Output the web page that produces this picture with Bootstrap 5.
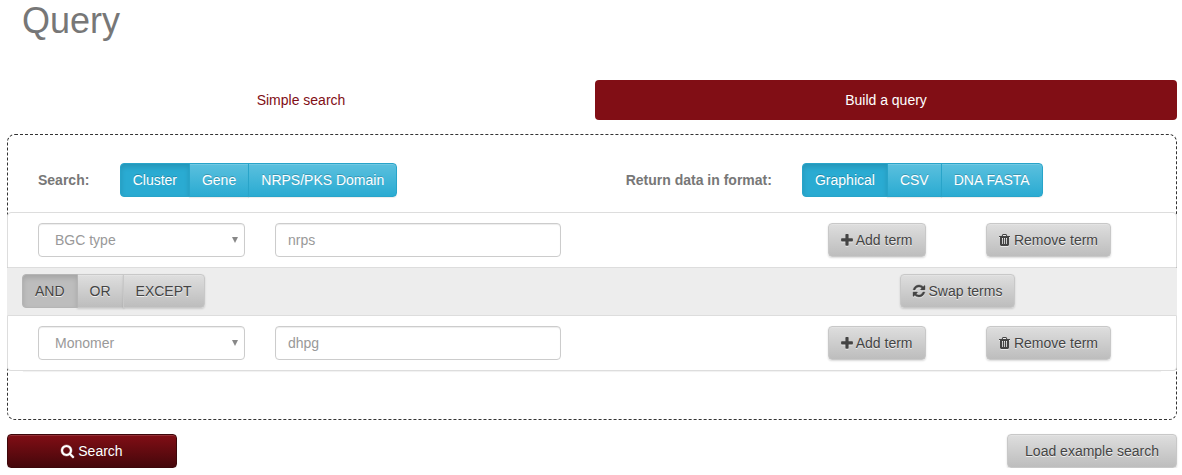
<!DOCTYPE html>
<html lang="en">
<head>
<meta charset="utf-8">
<meta name="viewport" content="width=device-width, initial-scale=1">
<title>Query</title>
<link href="https://cdn.jsdelivr.net/npm/bootstrap@5.3.0/dist/css/bootstrap.min.css" rel="stylesheet">
<style>
  body { font: 14px/20px "Liberation Sans", Arial, sans-serif; color: #777; overflow: hidden; }
  .page { width: 1170px; margin-left: 7px; }
  h1 { font-size: 36px; line-height: 40px; font-weight: 400; padding: 1px 0 0 15px; margin-bottom: 39px; }
  .nav-pills { --bs-nav-pills-border-radius: 4px; --bs-nav-pills-link-active-bg: #810e15; --bs-nav-link-color: #810e15; --bs-nav-link-hover-color: #810e15; }
  .nav-pills .nav-link { padding: 10px 15px; font-size: 14px; }
  .nav-pills .nav-item:first-child { flex: 0 0 588px; }
  .builder { border: 1px dashed #333; border-radius: 8px; margin-top: 14px; height: 286px; padding-top: 28px; }
  .btn { --bs-btn-padding-x: 12px; --bs-btn-padding-y: 6px; --bs-btn-font-size: 14px; --bs-btn-line-height: 20px; --bs-btn-border-radius: 4px; white-space: nowrap; }
  .btn-glossy { color: #444; text-shadow: 0 1px 0 #f0f0f0; background: linear-gradient(#dedede, #bdbdbd); border-color: #c8c8c8; box-shadow: inset 0 1px 0 rgba(255,255,255,.15), 0 1px 2px rgba(0,0,0,.15); }
  .btn-glossy.active { color: #444; background: #bdbdbd; border-color: #b5b5b5; box-shadow: inset 0 3px 5px rgba(0,0,0,.125); }
  .btn-aqua { color: #fff; text-shadow: 0 -1px 0 rgba(0,0,0,.2); background: linear-gradient(#5bc0de, #2aabd2); border-color: #28a4c9; box-shadow: inset 0 1px 0 rgba(255,255,255,.15), 0 1px 1px rgba(0,0,0,.075); }
  .btn-aqua.active { color: #fff; background: #2aabd2; border-color: #28a4c9; box-shadow: inset 0 3px 5px rgba(0,0,0,.125); }
  .btn-wine { color: #fff; text-shadow: 0 -1px 0 rgba(0,0,0,.2); background: linear-gradient(#810e15, #45070b); border-color: #3e070a; box-shadow: inset 0 1px 0 rgba(255,255,255,.15), 0 1px 1px rgba(0,0,0,.075); }
  .wide-btn { width: 170px; }
  .search-side { padding-left: 30px; }
  .search-side .btn { padding-left: 11.7px; padding-right: 11.9px; }
  .search-side .btn:nth-child(2) { padding-left: 12px; }
  .search-side .btn:last-child { padding-left: 12.2px; padding-right: 12.1px; }
  .format-side { padding-left: 33.7px; }
  .search-label { width: 82px; }
  .format-label { width: 176.300px; }
  .term-list { --bs-list-group-border-radius: 4px; --bs-list-group-border-color: #ddd; margin: 15px -1px 0; }
  .term-list .list-group-item { color: #777; }
  .term-row { padding: 10px 65px 10px 30px; }
  .list-group .operator-row { padding: 6px 161px 7px 14px; background: #ededed; border-top: 0; border-left-color: #ededed; border-right-color: #ededed; }
  .field { height: 34px; border: 1px solid #ccc; border-radius: 4px; font-size: 14px; line-height: 20px; color: #999; padding: 6px 12px; box-shadow: inset 0 1px 1px rgba(0,0,0,.075); }
  .type-field { width: 207px; padding: 6px 6px 6px 16px; }
  .value-field { width: 286px; margin-left: 30px; }
  .add-btn { width: 98px; padding-left: 11px; padding-right: 12px; }
  .remove-btn { margin-left: 60px; }
  .swap-btn { width: 115px; padding-left: 11px; padding-right: 11px; }
  .panel-edge { height: 1px; margin: 0 15px; box-shadow: 0 0 1px #eee; background: #f2f2f2; }
  .glyph { height: 14px; fill: currentColor; vertical-align: -2px; filter: drop-shadow(0 1px 0 rgba(255,255,255,.6)); }
  .glyph-plus { height: 15px; vertical-align: -3px; }
  .glyph-bold { stroke: currentColor; stroke-width: 50; overflow: visible; }
  .btn-wine .glyph { filter: none; }
  .actions { margin-top: 14px; }
</style>
</head>
<body>
<svg class="d-none" xmlns="http://www.w3.org/2000/svg">
  <symbol id="plus" viewBox="192 0 1408 1792"><path d="M1600 736v192q0 40-28 68t-68 28h-416v416q0 40-28 68t-68 28h-192q-40 0-68-28t-28-68v-416h-416q-40 0-68-28t-28-68v-192q0-40 28-68t68-28h416v-416q0-40 28-68t68-28h192q40 0 68 28t28 68v416h416q40 0 68 28t28 68z"/></symbol>
  <symbol id="trash" viewBox="192 0 1408 1792"><path d="M704 1376v-704q0-14-9-23t-23-9h-64q-14 0-23 9t-9 23v704q0 14 9 23t23 9h64q14 0 23-9t9-23zm256 0v-704q0-14-9-23t-23-9h-64q-14 0-23 9t-9 23v704q0 14 9 23t23 9h64q14 0 23-9t9-23zm256 0v-704q0-14-9-23t-23-9h-64q-14 0-23 9t-9 23v704q0 14 9 23t23 9h64q14 0 23-9t9-23zm-544-992h448l-48-117q-7-9-17-11h-317q-10 2-17 11zm928 32v64q0 14-9 23t-23 9h-96v948q0 83-47 143.500t-113 60.500h-832q-66 0-113-58.500t-47-141.500v-952h-96q-14 0-23-9t-9-23v-64q0-14 9-23t23-9h309l70-167q15-37 54-63t79-26h320q40 0 79 26t54 63l70 167h309q14 0 23 9t9 23z"/></symbol>
  <symbol id="refresh" viewBox="128 0 1536 1792" overflow="visible"><path d="M1639 1056q0 5-1 7-64 268-268 434.500t-478 166.500q-146 0-282.500-55t-243.500-157l-129 129q-19 19-45 19t-45-19-19-45v-448q0-26 19-45t45-19h448q26 0 45 19t19 45-19 45l-137 137q71 66 161 102t187 36q134 0 250-65t186-179q11-17 53-117 8-23 30-23h192q13 0 22.500 9.500t9.500 22.500zm25-800v448q0 26-19 45t-45 19h-448q-26 0-45-19t-19-45 19-45l138-138q-148-137-349-137-134 0-250 65t-186 179q-11 17-53 117-8 23-30 23h-199q-13 0-22.500-9.500t-9.500-22.500v-7q65-268 270-434.500t480-166.500q146 0 284 55.500t245 156.500l130-129q19-19 45-19t45 19 19 45z"/></symbol>
  <symbol id="search" viewBox="64 0 1664 1792" overflow="visible"><path d="M1216 832q0-185-131.500-316.500t-316.500-131.500-316.500 131.500-131.500 316.500 131.500 316.500 316.500 131.500 316.500-131.500 131.500-316.500zm512 832q0 52-38 90t-90 38q-54 0-90-38l-343-342q-179 124-399 124-143 0-273.500-55.500t-225-150-150-225-55.500-273.500 55.500-273.500 150-225 225-150 273.500-55.500 273.500 55.500 225 150 150 225 55.500 273.500q0 220-124 399l343 343q37 37 37 90z"/></symbol>
  <symbol id="caret" viewBox="0 0 6 6"><path d="M0 0h6L3 6z"/></symbol>
</svg>

<main class="page">
  <h1>Query</h1>
  <ul class="nav nav-pills text-center flex-nowrap">
    <li class="nav-item"><a class="nav-link" href="#">Simple search</a></li>
    <li class="nav-item flex-fill"><a class="nav-link active" href="#">Build a query</a></li>
  </ul>

  <section class="builder">
    <div class="row g-0">
      <div class="col-6 d-flex align-items-center search-side">
        <strong class="search-label">Search:</strong>
        <div class="btn-group">
          <button class="btn btn-aqua active">Cluster</button>
          <button class="btn btn-aqua">Gene</button>
          <button class="btn btn-aqua">NRPS/PKS Domain</button>
        </div>
      </div>
      <div class="col-6 d-flex align-items-center format-side">
        <strong class="format-label">Return data in format:</strong>
        <div class="btn-group">
          <button class="btn btn-aqua active">Graphical</button>
          <button class="btn btn-aqua">CSV</button>
          <button class="btn btn-aqua">DNA FASTA</button>
        </div>
      </div>
    </div>

    <div class="list-group term-list">
      <div class="list-group-item term-row d-flex">
        <div class="field type-field d-flex justify-content-between align-items-center"><span>BGC type</span><svg width="6" height="6" fill="#888"><use href="#caret"/></svg></div>
        <input class="field value-field" type="text" value="nrps" aria-label="Value">
        <button class="btn btn-glossy add-btn ms-auto"><svg class="glyph glyph-plus" width="12"><use href="#plus"/></svg> Add term</button>
        <button class="btn btn-glossy remove-btn"><svg class="glyph" width="11"><use href="#trash"/></svg> Remove term</button>
      </div>
      <div class="list-group-item operator-row d-flex justify-content-between">
        <div class="btn-group">
          <button class="btn btn-glossy active">AND</button>
          <button class="btn btn-glossy">OR</button>
          <button class="btn btn-glossy">EXCEPT</button>
        </div>
        <button class="btn btn-glossy swap-btn"><svg class="glyph glyph-bold" width="12"><use href="#refresh"/></svg> Swap terms</button>
      </div>
      <div class="list-group-item term-row d-flex">
        <div class="field type-field d-flex justify-content-between align-items-center"><span>Monomer</span><svg width="6" height="6" fill="#888"><use href="#caret"/></svg></div>
        <input class="field value-field" type="text" value="dhpg" aria-label="Value">
        <button class="btn btn-glossy add-btn ms-auto"><svg class="glyph glyph-plus" width="12"><use href="#plus"/></svg> Add term</button>
        <button class="btn btn-glossy remove-btn"><svg class="glyph" width="11"><use href="#trash"/></svg> Remove term</button>
      </div>
    </div>
    <div class="panel-edge"></div>
  </section>

  <div class="d-flex justify-content-between actions">
    <button class="btn btn-wine wide-btn"><svg class="glyph glyph-bold" width="13"><use href="#search"/></svg> Search</button>
    <button class="btn btn-glossy wide-btn">Load example search</button>
  </div>
</main>
<script src="https://cdn.jsdelivr.net/npm/bootstrap@5.3.0/dist/js/bootstrap.bundle.min.js"></script>
</body>
</html>
